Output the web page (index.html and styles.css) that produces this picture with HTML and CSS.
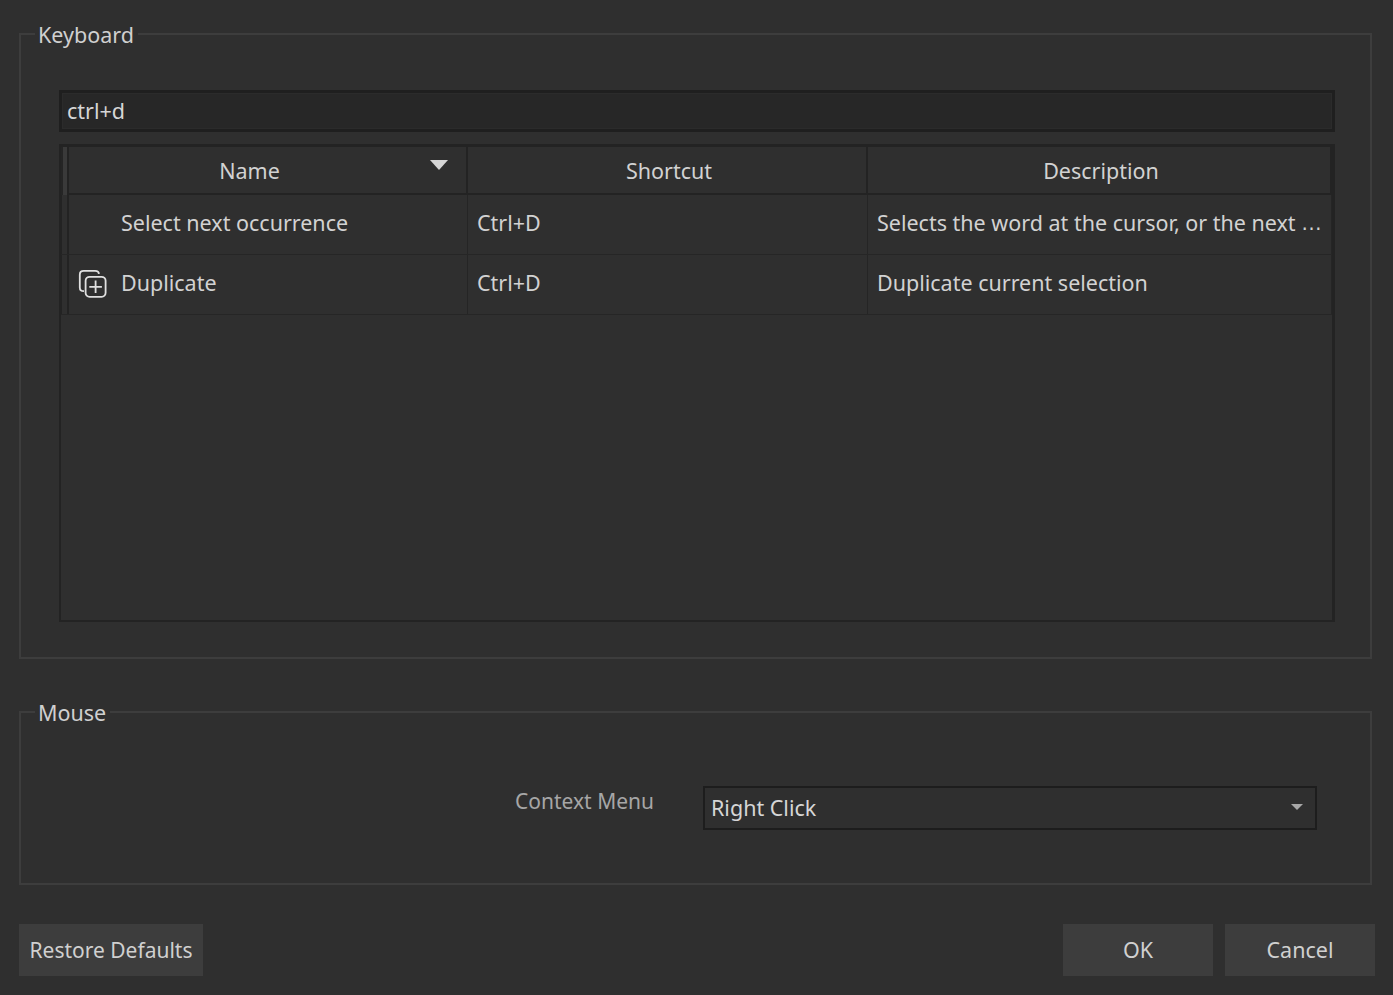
FILE: index.html
```html
<!DOCTYPE html>
<html lang="en">
<head>
<meta charset="utf-8">
<title>Preferences</title>
<link rel="stylesheet" href="styles.css">
</head>
<body>
<main class="dialog">
  <fieldset class="group group-keyboard">
    <legend>Keyboard</legend>
    <div class="group-body keyboard-body">
      <div class="search">ctrl+d</div>
      <div class="table">
        <div class="row head">
          <div class="handle"></div>
          <div class="cell name-head">Name
            <svg class="sort" width="20" height="12" viewBox="0 0 20 12"><path d="M1 1h18l-9 10z" fill="#d6d6d6"/></svg>
          </div>
          <div class="cell">Shortcut</div>
          <div class="cell">Description</div>
        </div>
        <div class="row body">
          <div class="handle"></div>
          <div class="cell name"><span class="icon"></span>Select next occurrence</div>
          <div class="cell">Ctrl+D</div>
          <div class="cell desc"><span class="clip">Selects the word at the cursor, or the next</span><span class="ellipsis">…</span></div>
        </div>
        <div class="row body">
          <div class="handle"></div>
          <div class="cell name"><span class="icon">
            <svg width="30" height="30" viewBox="0 0 30 30" fill="none" stroke="#e0e0e0" stroke-width="1.8"><path d="M7 23.200c-3 0-4.200-1.200-4.200-3.800V6.800C2.800 4 4 2.800 6.800 2.800h11.400c2.400 0 3.600 1 3.800 3"/><rect x="8.600" y="8.800" width="20" height="20" rx="4"/><path d="M18.600 12.500v12.600M12.300 18.800h12.600"/></svg>
          </span>Duplicate</div>
          <div class="cell">Ctrl+D</div>
          <div class="cell">Duplicate current selection</div>
        </div>
      </div>
    </div>
  </fieldset>
  <fieldset class="group group-mouse">
    <legend>Mouse</legend>
    <div class="group-body form-row">
      <label class="form-label">Context Menu</label>
      <div class="combo"><span>Right Click</span>
        <svg width="14" height="8" viewBox="0 0 14 8"><path d="M1 1h12l-6 6z" fill="#a8a8a8"/></svg>
      </div>
    </div>
  </fieldset>
  <footer class="buttons">
    <button class="btn btn-restore">Restore Defaults</button>
    <div class="actions">
      <button class="btn btn-action">OK</button>
      <button class="btn btn-action">Cancel</button>
    </div>
  </footer>
</main>
</body>
</html>
```
FILE: styles.css
```css
* { box-sizing: border-box; }
html, body { margin: 0; height: 100%; }
body {
  background: #2f2f2f;
  color: #d2d2d2;
  font-family: "Noto Sans", sans-serif;
  font-size: 21.5px;
  overflow: hidden;
}
.dialog { width: 1393px; height: 995px; padding: 20px 18px 0 19px; display: flex; flex-direction: column; }
.group {
  margin: 0;
  padding: 0;
  width: 1353px;
  border: 2px solid #3d3d3d;
  min-width: 0;
}
.group legend {
  margin-left: 14px;
  padding: 1px 4px 0 3px;
  line-height: 28px;
  height: 28px;
  color: #d0d0d0;
}
.group-keyboard { height: 639px; }
.keyboard-body { padding: 42px 0 0 38px; }
.group-mouse { height: 187px; margin-top: 39px; }
.search {
  height: 42px;
  background: #272727;
  border: 3px solid #1f1f1f;
  outline: 1px solid #2b2b2b;
  outline-offset: -4px;
  padding-left: 5px;
  line-height: 36px;
  color: #d6d6d6;
  width: 1276px;
}
.table {
  margin-top: 12px;
  width: 1276px;
  height: 478px;
  border: 2px solid #232323;
  border-right-width: 3px;
  border-top-width: 3px;
}
.row { display: grid; grid-template-columns: 8px 399px 400px 464px; }
.head { height: 48px; }
.body { height: 60px; border-bottom: 1px solid #262626; }
.handle { background: #2f2f2f; border-left: 1px solid #232323; border-right: 2px solid #232323; padding: 0; }
.head .handle { background: #3a3a3a; border-left: 2px solid #252525; }
.cell { display: flex; align-items: center; border-right: 1px solid #252525; padding: 0 0 4px 9px; line-height: 30px; min-width: 0; white-space: nowrap; }
.head .cell { justify-content: center; padding: 2px 0 0 4px; border-bottom: 2px solid #232323; border-right: 2px solid #232323; position: relative; }
.head .name-head { padding: 2px 36px 0 0; }
.sort { position: absolute; right: 17px; top: 12px; }
.cell.name { padding-left: 0; }
.icon { width: 52px; padding: 0 0 0 8px; display: inline-flex; align-items: center; flex: none; height: 30px; }
.desc { gap: 5px; }
.clip { overflow: hidden; }
.ellipsis { font-family: "Liberation Sans", sans-serif; }
.form-row { display: flex; align-items: flex-start; justify-content: flex-end; padding: 60px 53px 0 0; }
.form-label { color: #a6a6a6; font-size: 21px; line-height: 30px; margin-right: 49px; }
.combo {
  width: 614px;
  height: 44px;
  border: 2px solid #1d1d1d;
  display: flex;
  align-items: center;
  justify-content: space-between;
  padding: 0 11px 2px 6px;
  color: #d6d6d6;
}
.buttons { margin-top: 39px; width: 1356px; display: flex; justify-content: space-between; }
.actions { display: flex; gap: 12px; }
.btn {
  height: 52px;
  border: 0;
  background: #3d3d3d;
  color: #d0d0d0;
  font: inherit;
  padding: 0 0 2px;
}
.btn-restore { width: 184px; font-size: 21px; padding: 0; }
.btn-action { width: 150px; }
```
